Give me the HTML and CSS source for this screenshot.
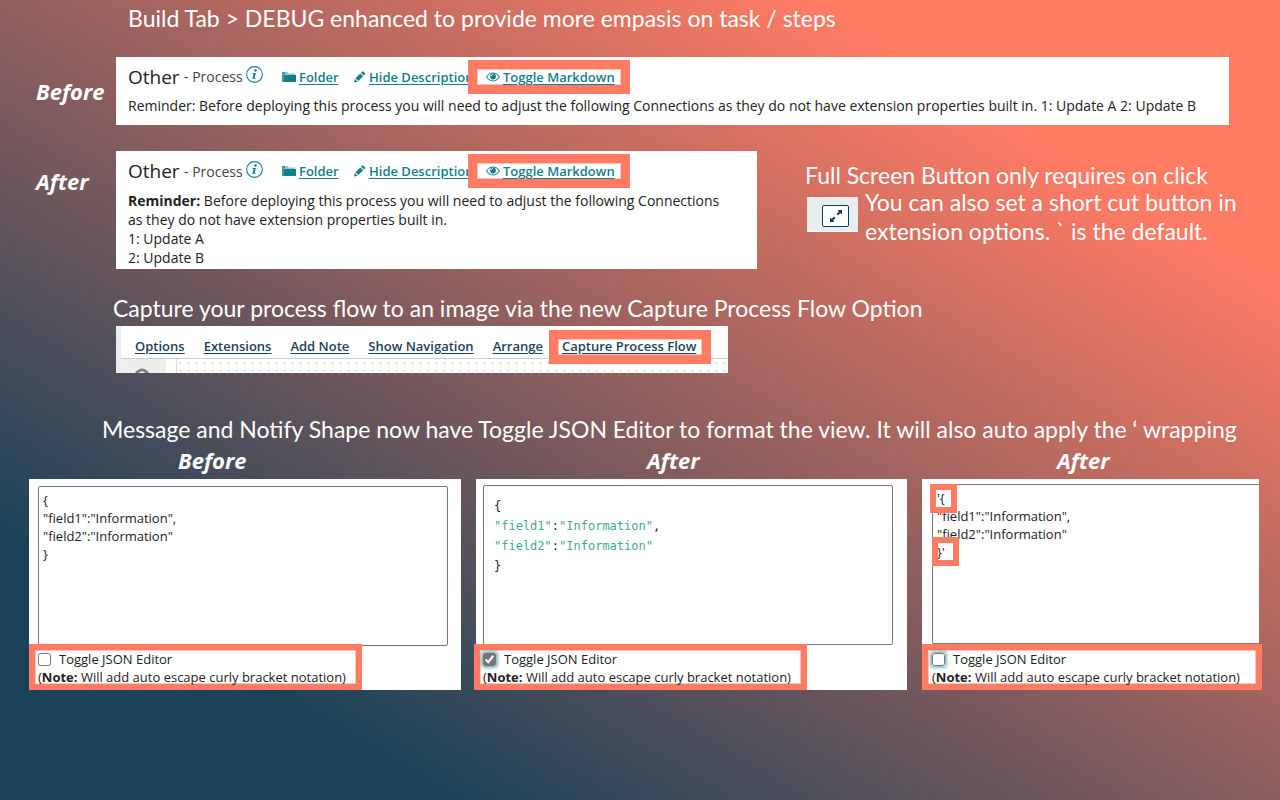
FILE: index.html
```html
<!DOCTYPE html>
<html lang="en">
<head>
<meta charset="utf-8">
<title>Build Tab enhancements</title>
<link rel="stylesheet" href="styles.css">
</head>
<body>
<svg class="sprite" aria-hidden="true">
  <symbol id="info" viewBox="0 0 16 16"><circle cx="8" cy="8" r="7.4" fill="none" stroke="currentColor" stroke-width="1"/><circle cx="8.9" cy="4.2" r="1.2"/><path d="M6.2 6.6h3.1L8.1 11.2h1.3l-.3.9H5.9l1.2-4.6H6z"/></symbol>
  <symbol id="folder" viewBox="0 0 14 12"><path d="M0 1h3v2H2v8H0z" opacity=".8"/><path d="M3 1h2.500l1 1.500H13V4H2V3z" opacity=".45"/><path d="M2 4h12v7H2z"/></symbol>
  <symbol id="pencil" viewBox="0 0 12 12"><path d="M.5 11.500l.8-3.600 2.800 2.800zM2 7.200l4.800-4.800 2.800 2.800L4.800 10zM7.500 1.700L8.700.5q.5-.4 1 0l1.800 1.800q.4.500 0 1l-1.200 1.200z"/></symbol>
  <symbol id="eye" viewBox="0 0 14 10"><path fill-rule="evenodd" d="M0 5Q3 .6 7 .6T14 5Q11 9.400 7 9.400T0 5zm1.200 0Q3.500 8.400 7 8.400T12.800 5Q11 1.600 7 1.600T1.200 5z"/><circle cx="7" cy="4.500" r="2.900"/><path d="M5.200 4.300Q5.300 2.600 7 2.500" stroke="#fff" stroke-width=".8" fill="none"/></symbol>
</svg>
<main class="page">
  <h1 class="title title-build">Build Tab &gt; DEBUG enhanced to provide more empasis on task / steps</h1>

  <section class="row row-before">
    <h2 class="label">Before</h2>
    <div class="card">
      <div class="bar">
        <span class="name">Other</span><span class="kind">- Process</span><svg class="info"><use href="#info"/></svg>
        <a class="link folder" href="#"><svg><use href="#folder"/></svg><span>Folder</span></a>
        <a class="link hide" href="#"><svg><use href="#pencil"/></svg><span>Hide Description</span></a>
        <a class="link mark" href="#"><svg><use href="#eye"/></svg><span>Toggle Markdown</span></a>
      </div>
      <p class="text">Reminder: Before deploying this process you will need to adjust the following Connections as they do not have extension properties built in. 1: Update A 2: Update B</p>
    </div>
  </section>

  <section class="row row-after">
    <h2 class="label">After</h2>
    <div class="card">
      <div class="bar">
        <span class="name">Other</span><span class="kind">- Process</span><svg class="info"><use href="#info"/></svg>
        <a class="link folder" href="#"><svg><use href="#folder"/></svg><span>Folder</span></a>
        <a class="link hide" href="#"><svg><use href="#pencil"/></svg><span>Hide Description</span></a>
        <a class="link mark" href="#"><svg><use href="#eye"/></svg><span>Toggle Markdown</span></a>
      </div>
      <p class="text"><b>Reminder:</b> Before deploying this process you will need to adjust the following Connections<br>as they do not have extension properties built in.<br>1: Update A<br>2: Update B</p>
    </div>
    <div class="full">
      <p class="full-title">Full Screen Button only requires on click</p>
      <div class="full-row">
        <div class="swatch"><button class="expand" type="button" aria-label="Full screen"><svg viewBox="0 0 12 12"><path d="M7.500 0H12v4.500L10.400 3 8 5.400 6.600 4 9 1.600zM4.500 12H0V7.500L1.600 9 4 6.600 5.400 8 3 10.400z"/></svg></button></div>
        <p class="full-text">You can also set a short cut button in<br>extension options. ` is the default.</p>
      </div>
    </div>
  </section>

  <h2 class="title title-capture">Capture your process flow to an image via the new Capture Process Flow Option</h2>
  <section class="toolbar">
    <nav class="menu">
      <a href="#">Options</a><a href="#">Extensions</a><a href="#">Add Note</a><a href="#">Show Navigation</a><a href="#">Arrange</a><a class="capture" href="#">Capture Process Flow</a>
    </nav>
    <div class="canvas"><div class="side"><svg viewBox="0 0 16 16"><circle cx="8" cy="8" r="6" fill="none" stroke="#808080" stroke-width="3"/></svg></div><div class="dots"></div></div>
  </section>

  <h2 class="title title-json">Message and Notify Shape now have Toggle JSON Editor to format the view. It will also auto apply the ‘ wrapping</h2>
  <section class="editors">
    <div class="editor first">
      <h3 class="label">Before</h3>
      <div class="panel">
        <textarea class="box" aria-label="Message before" spellcheck="false">{
"field1":"Information",
"field2":"Information"
}</textarea>
        <div class="note"><label><input type="checkbox">Toggle JSON Editor</label><p>(<b>Note:</b> Will add auto escape curly bracket notation)</p></div>
      </div>
    </div>
    <div class="editor second">
      <h3 class="label">After</h3>
      <div class="panel">
        <pre class="box code">{
<i>"field1"</i>:<i>"Information"</i>,
<i>"field2"</i>:<i>"Information"</i>
}</pre>
        <div class="note"><label><input class="focus" type="checkbox" checked>Toggle JSON Editor</label><p>(<b>Note:</b> Will add auto escape curly bracket notation)</p></div>
      </div>
    </div>
    <div class="editor third">
      <h3 class="label">After</h3>
      <div class="panel">
        <textarea class="box" aria-label="Message after" spellcheck="false">'{
"field1":"Information",
"field2":"Information"
}'</textarea>
        <span class="mark-box open"></span><span class="mark-box close"></span>
        <div class="note"><label><input class="focus" type="checkbox">Toggle JSON Editor</label><p>(<b>Note:</b> Will add auto escape curly bracket notation)</p></div>
      </div>
    </div>
  </section>
</main>
</body>
</html>
```

FILE: styles.css
```css
* { box-sizing: border-box; }
body {
  margin: 0;
  font-family: "Open Sans", "Noto Sans", sans-serif;
  color: #222;
  background: linear-gradient(31deg, #1b4258 17%, #ff7b64 82%) no-repeat;
  min-height: 100vh;
}
h1, h2, h3, p, pre { margin: 0; }
.sprite { position: absolute; width: 0; height: 0; }
svg { fill: currentColor; flex: none; }
.page { display: flex; flex-direction: column; }
.title, .full { font: 400 23px/28px Lato, "Open Sans", sans-serif; color: #fff; white-space: nowrap; }
.title-build { margin: 4px 0 25px 128px; }
.label { font: italic 700 22px/26px "Open Sans", sans-serif; color: #fff; }
.row { display: flex; align-items: flex-start; }
.row .label { width: 116px; padding-left: 36px; flex: none; }
.row-before .label { margin-top: 21px; }
.row-after .label { margin-top: 17px; }
.card { background: #fff; padding: 0 12px; }
.row-before .card { flex: 1; height: 68px; margin-right: 51px; }
.row-after .card { width: 641px; height: 118px; }
.row-after { margin-top: 26px; }
.bar { display: flex; align-items: center; height: 40px; }
.row-before .bar { height: 39px; }
.name { font-size: 19px; width: 56px; }
.kind { font-size: 14px; color: #444; width: 62px; white-space: nowrap; }
.info { width: 17px; height: 17px; margin: 0 19px 4px 0; color: #127f8b; }
.link { display: flex; align-items: center; gap: 3px; font-size: 13px; font-weight: 600; color: #127f8b; text-decoration: none; white-space: nowrap; }
.link span { text-decoration: underline; text-underline-offset: 2px; }
.link svg { width: 14px; height: 12px; }
.folder { width: 71px; }
.hide { width: 115px; }
.hide svg { width: 13px; }
.mark { position: relative; background: #fff; border: 9px solid #ff7b64; box-shadow: inset 0 0 0 1px #ffc4b8; height: 34px; width: 162px; padding-left: 9px; }
.text { font-size: 14px; line-height: 19px; white-space: nowrap; }
.full { margin: 11px 0 0 48px; }
.full-title { line-height: 26px; }
.full-text { line-height: 29px; }
.full-row { display: flex; gap: 7px; }
.swatch { width: 51px; height: 35px; margin: 9px 0 0 2px; background: #e8edef; padding: 8px 0 0 15px; border-bottom: 1px solid #fff; }
.expand { display: grid; place-items: center; width: 27px; height: 22px; padding: 0; border: 1px solid #084058; border-radius: 2px; background: #fff; color: #084058; }
.expand svg { width: 12px; height: 12px; }
.title-capture { margin: 25px 0 4px 113px; }
.toolbar { width: 612px; height: 47px; margin-left: 116px; background: #fff; border-left: 5px solid #e8edef; overflow: hidden; }
.menu { display: flex; align-items: center; height: 33px; padding: 8px 0 0 14px; gap: 19px; border-bottom: 1px solid #ccc; white-space: nowrap; }
.menu a { font-size: 13px; font-weight: 600; color: #1b4258; text-underline-offset: 2px; }
.menu .capture { position: relative; }
.menu .capture::after { content: ""; position: absolute; inset: -7px -15px -9px -13px; border: 9px solid #ff7b64; box-shadow: inset 0 0 0 1px #ffc4b8; }
.canvas { display: flex; height: 14px; }
.side { width: 45px; height: 14px; background: #eee; padding: 8px 0 0 13px; overflow: hidden; }
.side svg { width: 16px; height: 16px; }
.dots { flex: 1; margin-left: 10px; border-left: 1px solid #ddd; background: linear-gradient(#fff 0 3px, transparent 3px 5px, #fff 5px) 0 0 / 8px 8px, repeating-linear-gradient(90deg, #fff 0 3px, #ccc 3px 4px, #fff 4px 8px); }
.title-json { margin: 42px 0 4px 102px; }
.editors { display: flex; padding: 0 21px 0 29px; }
.editor { display: flex; flex-direction: column; }
.editor .label { margin-bottom: 6px; }
.first { flex: 432; }
.second { flex: 431; margin-left: 15px; }
.third { flex: 337; margin-left: 15px; }
.first .label { padding-left: 149px; }
.second .label { padding-left: 171px; }
.third .label { padding-left: 135px; }
.panel { position: relative; background: #fff; height: 211px; padding-top: 7px; }
.second .panel { padding-top: 6px; }
.third .panel { padding-top: 5px; }
.box { display: block; width: calc(100% - 22px); height: 160px; margin: 0 0 0 9px; padding: 4px; border: 1px solid #777; border-radius: 2px; font: 13px/18px "Open Sans", sans-serif; color: #222; background: #fff; resize: none; overflow: hidden; outline: 0; }
.second .box { width: calc(100% - 21px); margin-left: 7px; }
.third .box { width: calc(100% - 10px); margin-left: 10px; border-right: 0; border-radius: 2px 0 0 2px; }
.box.code { font: 12px/20px "DejaVu Sans Mono", monospace; padding: 10px; }
.code i { font-style: normal; color: #3fab8c; }
.note { position: absolute; left: 0; bottom: 0; width: 333px; height: 46px; border: 6px solid #ff7b64; box-shadow: inset 0 0 0 1px #ffc4b8; padding-left: 3px; font-size: 13px; line-height: 18px; white-space: nowrap; background: #fff; }
.second .note { left: -2px; }
.third .note { right: -3px; width: auto; padding-left: 4px; }
.note label { display: flex; align-items: center; }
.note input { width: 13px; height: 13px; margin: 1px 8px 0 0; accent-color: #767676; }
.note .focus { box-shadow: 0 0 4px 1px #3b98a0; border-radius: 3px; }
.mark-box { position: absolute; width: 27px; height: 29px; border: 6px solid #ff7b64; }
.open { left: 8px; top: 5px; }
.close { left: 10px; top: 58px; }
```
